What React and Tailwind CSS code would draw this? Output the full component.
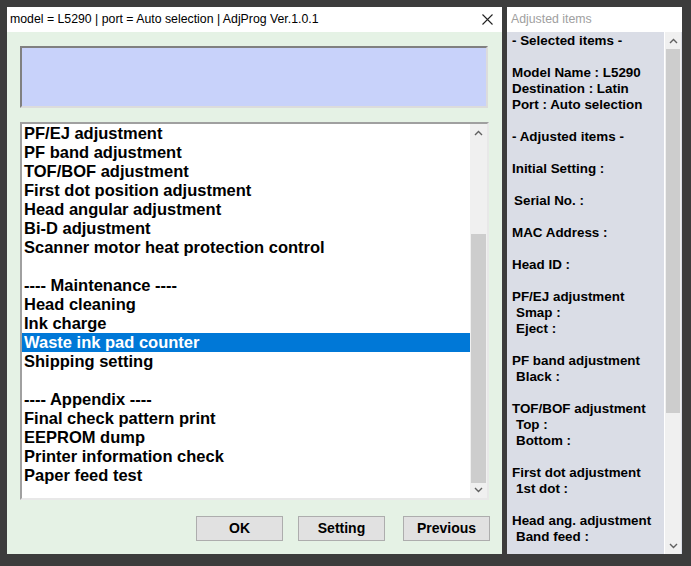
import React from "react";

const menu = [
  "PF/EJ adjustment",
  "PF band adjustment",
  "TOF/BOF adjustment",
  "First dot position adjustment",
  "Head angular adjustment",
  "Bi-D adjustment",
  "Scanner motor heat protection control",
  "",
  "---- Maintenance ----",
  "Head cleaning",
  "Ink charge",
  "Waste ink pad counter",
  "Shipping setting",
  "",
  "---- Appendix ----",
  "Final check pattern print",
  "EEPROM dump",
  "Printer information check",
  "Paper feed test",
];

// indent: 0 none, 1 small (Serial No.), 2 sub item
const adjusted = [
  ["- Selected items -", 0],
  ["", 0],
  ["Model Name : L5290", 0],
  ["Destination : Latin", 0],
  ["Port : Auto selection", 0],
  ["", 0],
  ["- Adjusted items -", 0],
  ["", 0],
  ["Initial Setting :", 0],
  ["", 0],
  ["Serial No. :", 1],
  ["", 0],
  ["MAC Address :", 0],
  ["", 0],
  ["Head ID :", 0],
  ["", 0],
  ["PF/EJ adjustment", 0],
  ["Smap :", 2],
  ["Eject :", 2],
  ["", 0],
  ["PF band adjustment", 0],
  ["Black :", 2],
  ["", 0],
  ["TOF/BOF adjustment", 0],
  ["Top :", 2],
  ["Bottom :", 2],
  ["", 0],
  ["First dot adjustment", 0],
  ["1st dot :", 2],
  ["", 0],
  ["Head ang. adjustment", 0],
  ["Band feed :", 2],
];

const Chevron = ({ up }) => (
  <svg width="9" height="6" viewBox="0 0 9 6">
    <polyline
      points={up ? "1,5 4.5,1.5 8,5" : "1,1 4.5,4.5 8,1"}
      fill="none"
      stroke="#606060"
      strokeWidth="1.4"
    />
  </svg>
);

const WinButton = ({ children }) => (
  <button
    type="button"
    className="w-[87px] h-[25px] bg-[#e1e1e1] border border-[#adadad] text-[14px] font-bold text-black"
  >
    {children}
  </button>
);

export default function App() {
  return (
    <div
      className="w-[691px] h-[566px] bg-[#3c3c3c] flex items-start pt-[7px] pl-[7px] overflow-hidden"
      style={{ fontFamily: '"Liberation Sans", Arial, sans-serif' }}
    >
      {/* main window */}
      <div className="w-[495px] h-[547px] flex flex-col bg-[#e5f2e5]">
        <div className="h-[25px] bg-white flex items-center justify-between pl-[3px] pr-[9px]">
          <span className="text-[12.3px] text-black">
            model = L5290 | port = Auto selection | AdjProg Ver.1.0.1
          </span>
          <svg width="11" height="11" viewBox="0 0 11 11">
            <path d="M0.5 0.5 L10.5 10.5 M10.5 0.5 L0.5 10.5" stroke="#222" strokeWidth="1.1" />
          </svg>
        </div>

        <div className="flex flex-col pl-[13px] pt-[14px]">
          <div className="w-[468px] h-[62px] bg-[#c8d2fa] border-2 border-t-[#808080] border-l-[#808080] border-r-[#dcdcdc] border-b-[#dcdcdc]" />

          <div className="mt-[14px] w-[469px] h-[378px] bg-white border-2 border-t-[#a0a0a0] border-l-[#a0a0a0] border-r-[#e8e8e8] border-b-[#e8e8e8] flex">
            <div className="flex-1 text-[16.5px] font-bold leading-[19px] text-black">
              {menu.map((m, i) =>
                m === "Waste ink pad counter" ? (
                  <div key={i} className="h-[19px] bg-[#0078d7] text-white pl-[2px]">
                    {m}
                  </div>
                ) : (
                  <div key={i} className="h-[19px] pl-[2px]">
                    {m}
                  </div>
                )
              )}
            </div>
            <div className="w-[17px] bg-[#f0f0f0] flex flex-col">
              <div className="h-[17px] flex items-center justify-center">
                <Chevron up />
              </div>
              <div className="h-[93px]" />
              <div className="mx-[1px] h-[249px] bg-[#cdcdcd]" />
              <div className="flex-1 flex items-end justify-center pb-[5px]">
                <Chevron />
              </div>
            </div>
          </div>

          <div className="mt-[16px] flex gap-[15px] pl-[176px]">
            <WinButton>OK</WinButton>
            <WinButton>Setting</WinButton>
            <div className="ml-[3px]">
              <WinButton>Previous</WinButton>
            </div>
          </div>
        </div>
      </div>

      {/* adjusted items panel */}
      <div className="ml-[5px] w-[175px] h-[547px] flex flex-col">
        <div className="h-[25px] bg-white flex items-center pl-[4px]">
          <span className="text-[12.3px] text-[#a0a0a0]">Adjusted items</span>
        </div>
        <div className="flex-1 flex bg-[#dadde6]">
          <div className="w-[158px] border-r border-white pl-[5px] pt-[1px] text-[13.4px] font-bold leading-[16px] text-black overflow-hidden">
            {adjusted.map(([t, ind], i) => (
              <div
                key={i}
                className={
                  ind === 2
                    ? "h-[16px] whitespace-nowrap pl-[4px]"
                    : ind === 1
                    ? "h-[16px] whitespace-nowrap pl-[2px]"
                    : "h-[16px] whitespace-nowrap"
                }
              >
                {t}
              </div>
            ))}
          </div>
          <div className="w-[16px] bg-[#f0f0f0] flex flex-col">
            <div className="h-[17px] flex items-center justify-center">
              <Chevron up />
            </div>
            <div className="mx-[1px] h-[364px] bg-[#cdcdcd]" />
            <div className="flex-1 flex items-end justify-center pb-[5px]">
              <Chevron />
            </div>
          </div>
        </div>
      </div>
    </div>
  );
}
